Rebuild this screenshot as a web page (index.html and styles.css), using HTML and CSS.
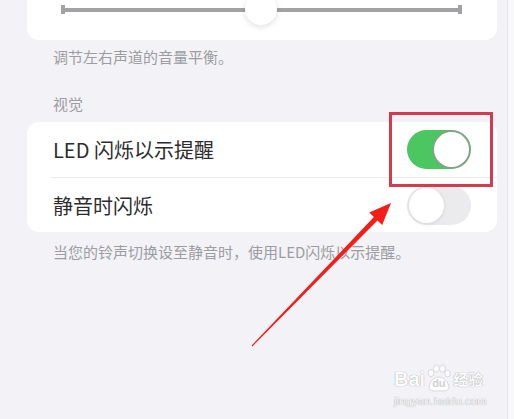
FILE: index.html
```html
<!DOCTYPE html>
<html lang="zh-CN">
<head>
  <meta charset="UTF-8" />
  <meta name="viewport" content="width=device-width, initial-scale=1" />
  <title>视觉 - 设置</title>
  <link rel="stylesheet" href="styles.css">
</head>
<body>

  <div class="screen">
    <!-- Balance slider card (top cut off) -->
    <div class="card slider-card">
      <div class="slider">
        <span class="cap"></span>
        <div class="track"></div>
        <span class="cap"></span>
        <span class="knob"></span>
      </div>
    </div>
    <div class="note">调节左右声道的音量平衡。</div>

    <div class="group-title">视觉</div>

    <div class="card list">
      <div class="row">
        <span class="label">LED 闪烁以示提醒</span>
        <span class="toggle on"><span class="dot"></span></span>
      </div>
      <div class="row">
        <span class="label">静音时闪烁</span>
        <span class="toggle"><span class="dot"></span></span>
      </div>
    </div>
    <div class="note note-bottom">当您的铃声切换设至静音时，使用LED闪烁以示提醒。</div>
  </div>

  <!-- annotations -->
  <div class="mark-box"></div>
  <svg class="arrow" width="514" height="419" viewBox="0 0 514 419">
    <polygon fill="#f41d17" points="251.6,345.6 373.9,217.1 369.2,212.5 391,203 382.2,225.1 377.5,220.5 252.4,346.4" />
  </svg>

  <div class="watermark">
    <div class="wm-logo">
      <span class="wm-bai">Bai</span>
      <span class="paw">
        <svg width="28" height="28" viewBox="0 0 28 28">
          <g fill="#fcfcfd" stroke="#d4d4da" stroke-width="0.9">
            <ellipse cx="6" cy="9" rx="3" ry="3.6" />
            <ellipse cx="11.5" cy="4.5" rx="3" ry="3.6" />
            <ellipse cx="17.5" cy="4.5" rx="3" ry="3.6" />
            <ellipse cx="22.5" cy="9.5" rx="2.8" ry="3.4" />
            <path d="M4 22 Q7 13 14 13 Q21 13 24 22 Q24 27 19 27 L9 27 Q4 27 4 22 Z" />
          </g>
        </svg>
        <i>du</i>
      </span>
      <span class="wm-cn">经验</span>
    </div>
    <div class="wm-url">jingyan.baidu.com</div>
  </div>

</body>
</html>
```

FILE: styles.css
```css
body {
  margin: 0;
  background-color: #f8f8fa;
  font-family: "Noto Sans CJK SC", "Noto Sans", sans-serif;
  color: #2a2a2c;
  overflow: hidden;
}

.screen {
  width: 507px;
  height: 419px;
  background-color: #f2f2f7;
  border-right: 1px solid #e7e7eb;
  overflow: hidden;
}

.card {
  background-color: #fff;
  border-radius: 12px;
  margin-left: 27px;
  width: 470px;
}

.slider-card {
  margin-top: -20px;
  height: 60px;
}

.slider {
  position: relative;
  display: flex;
  align-items: center;
  padding: 25px 35px 0 34px;
}

.slider .track {
  flex: 1;
  height: 4px;
  background-color: #a2a2a4;
}

.slider .cap {
  width: 4px;
  height: 9px;
  background-color: #a2a2a4;
}

.slider .knob {
  position: absolute;
  left: 218px;
  top: 13px;
  width: 32px;
  height: 32px;
  border-radius: 50%;
  background-color: #fff;
  box-shadow: 0 2px 6px rgba(0, 0, 0, 0.12);
}

.note {
  margin: 7px 0 0 53px;
  font-size: 15px;
  line-height: 20px;
  color: #9d9da1;
}

.note-bottom {
  margin-top: 10px;
}

.group-title {
  margin: 27px 0 0 53px;
  font-size: 15px;
  line-height: 20px;
  color: #9d9da1;
}

.list {
  margin-top: 8px;
}

.row {
  height: 55px;
  display: flex;
  align-items: center;
  justify-content: space-between;
  padding: 0 26px 0 26px;
}

.row + .row {
  border-top: 1px solid #ececf0;
  margin-left: 23px;
  padding-left: 3px;
  height: 54px;
}

.label {
  font-size: 20px;
  color: #2c2c2e;
}

.toggle {
  position: relative;
  width: 64px;
  height: 39px;
  border-radius: 20px;
  background-color: #ebebee;
}

.toggle .dot {
  position: absolute;
  top: 2px;
  left: 2px;
  width: 35px;
  height: 35px;
  border-radius: 50%;
  background-color: #fff;
  box-shadow: 0 1px 4px rgba(0, 0, 0, 0.1);
}

.toggle.on {
  background-color: #4cc661;
}

.toggle.on .dot {
  left: 27px;
  box-shadow: 0 0 0 1.5px #8f9a92;
}

.mark-box {
  position: absolute;
  left: 389px;
  top: 112px;
  width: 98px;
  height: 69px;
  border: 3px solid #d73a4e;
}

.arrow {
  position: absolute;
  left: 0;
  top: 0;
}

.watermark {
  position: absolute;
  left: 394px;
  top: 362px;
  width: 96px;
  color: #fcfcfd;
  font-family: "Liberation Sans", sans-serif;
  text-shadow: 0 0 1px rgba(0, 0, 0, 0.3), 0 0 1px rgba(0, 0, 0, 0.2);
}

.wm-logo {
  display: flex;
  align-items: flex-end;
  height: 30px;
}

.wm-bai {
  font-size: 20px;
  font-weight: 700;
  line-height: 26px;
}

.paw {
  position: relative;
  width: 28px;
  height: 28px;
}

.paw svg {
  position: absolute;
  left: 0;
  top: 0;
}

.paw i {
  position: absolute;
  left: 7px;
  top: 13px;
  font-style: normal;
  font-weight: 700;
  font-size: 11px;
  color: #d0d0d6;
  text-shadow: none;
}

.wm-cn {
  font-family: "Noto Sans CJK SC", sans-serif;
  font-size: 15px;
  font-weight: 700;
  line-height: 26px;
}

.wm-url {
  font-size: 11.5px;
  line-height: 14px;
  margin-top: 2px;
}
```
